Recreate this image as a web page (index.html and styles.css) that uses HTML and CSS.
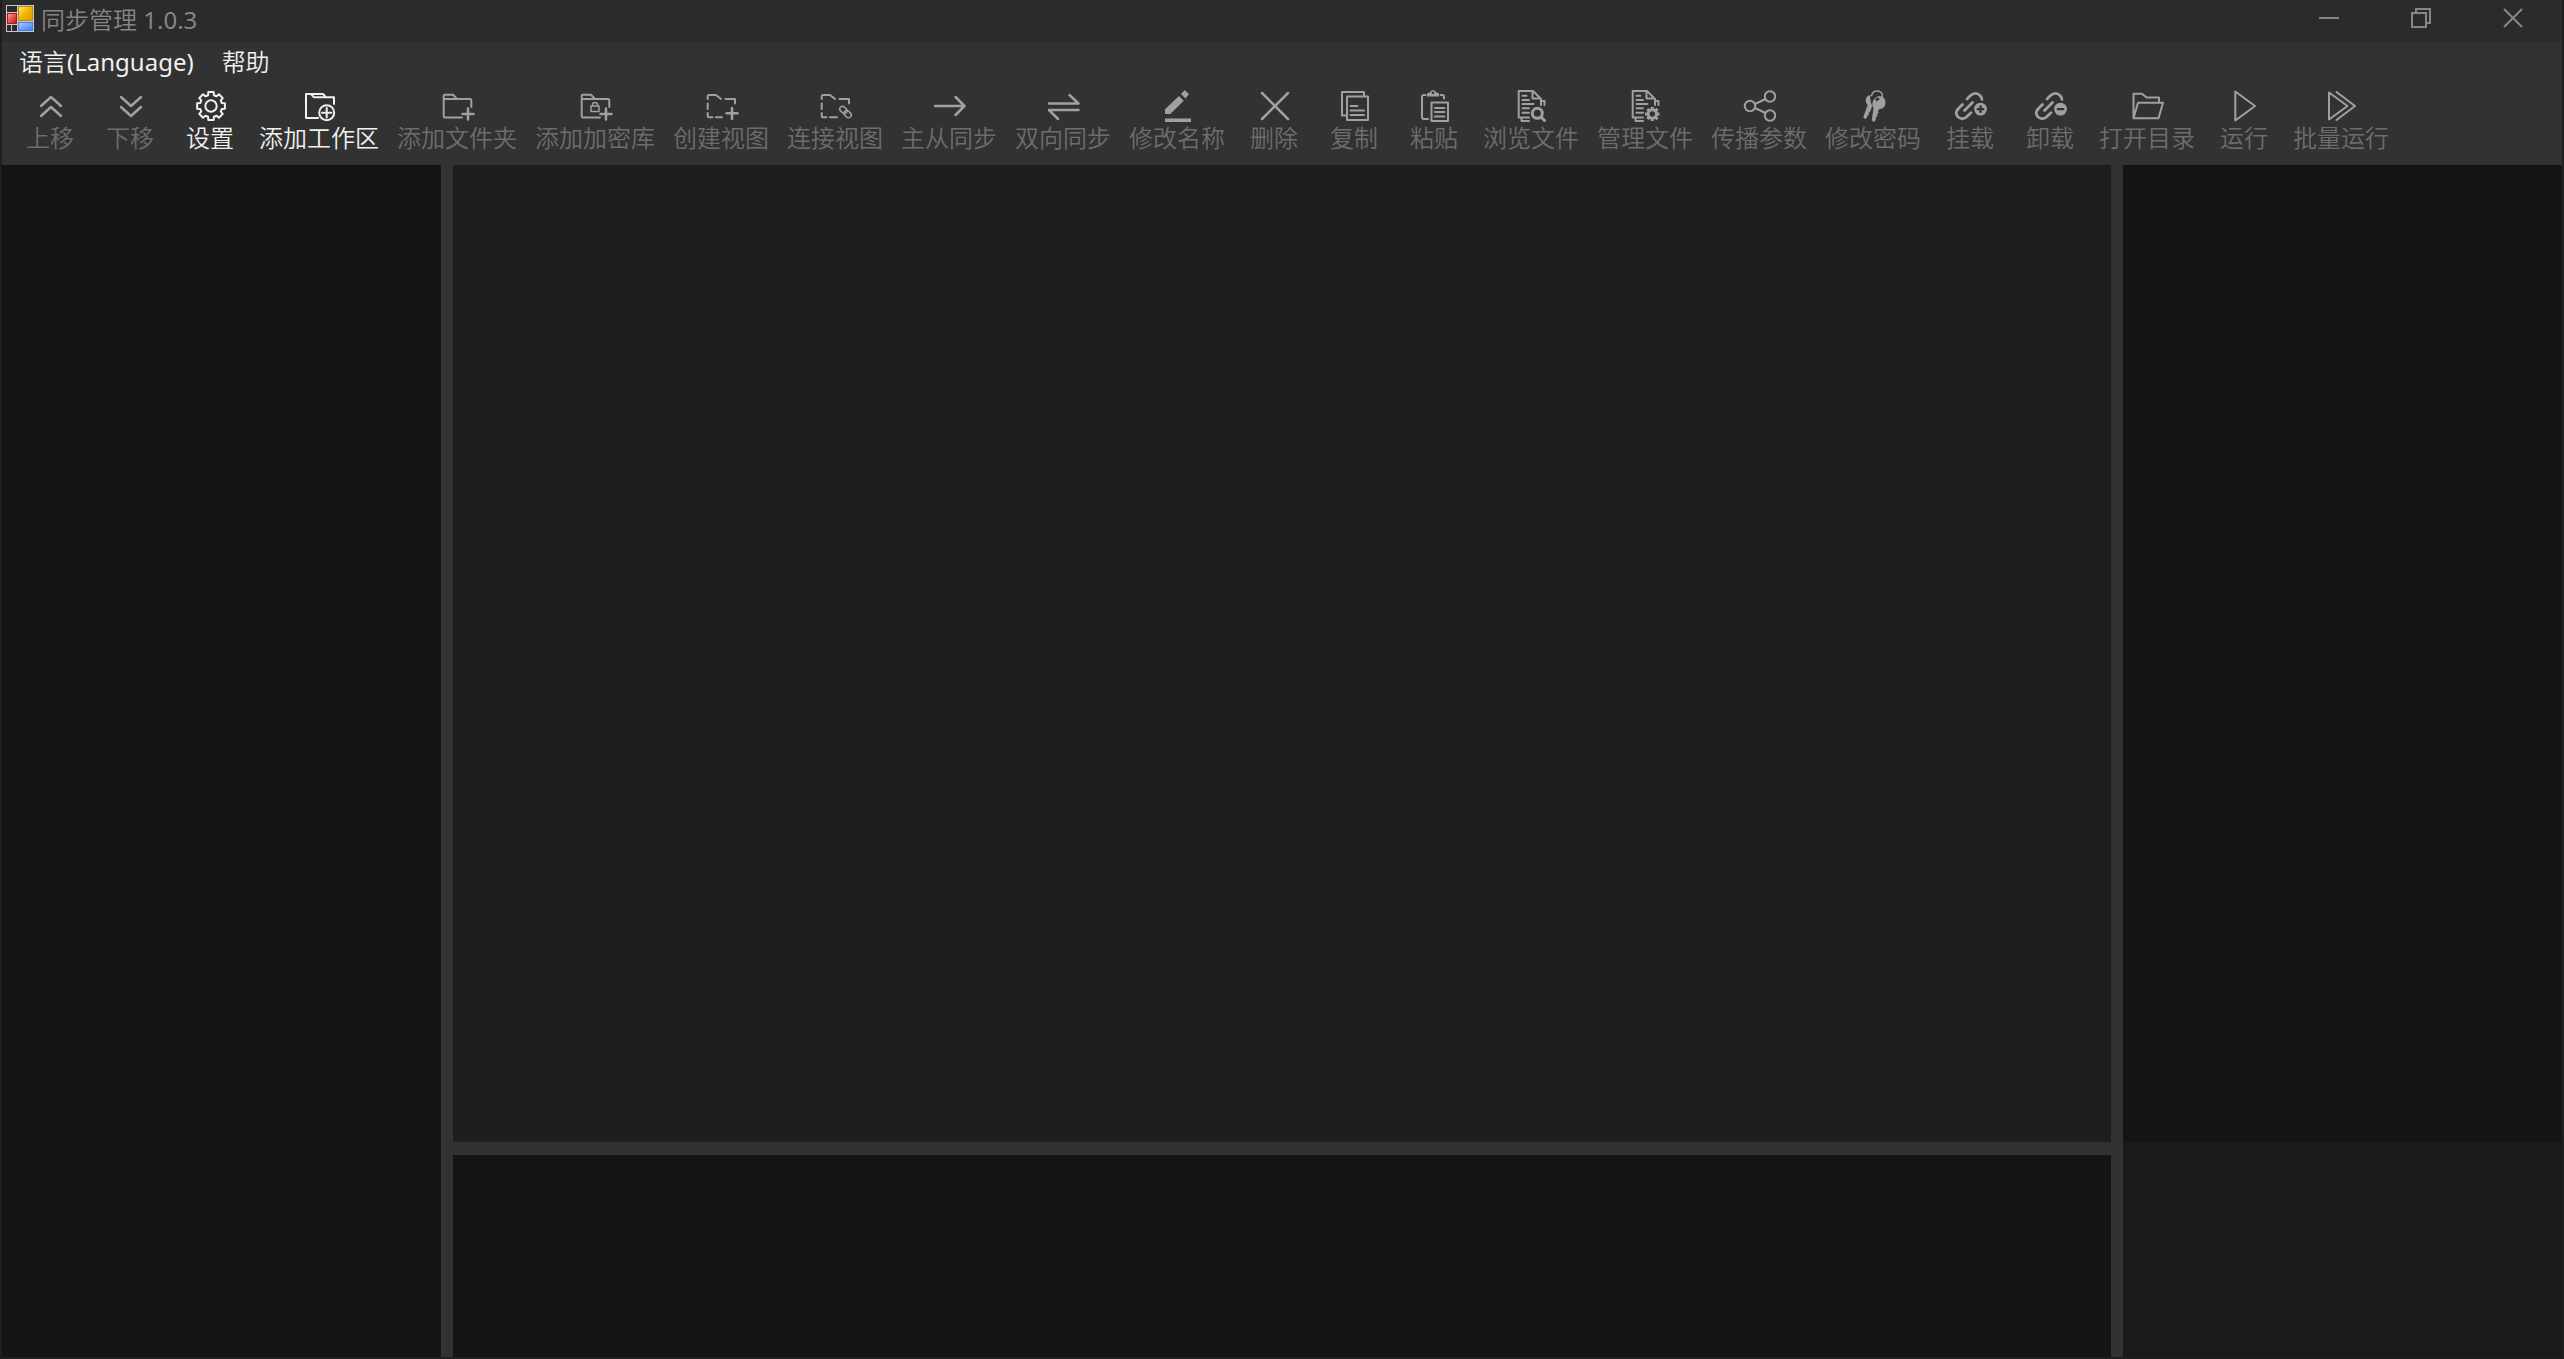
FILE: index.html
```html
<!DOCTYPE html>
<html lang="zh-CN">
<head>
    <meta charset="UTF-8">
    <title>同步管理 1.0.3</title>
    <link rel="stylesheet" href="styles.css">
</head>
<body>
<div class="window">
    <header class="titlebar">
        <svg class="app-icon" viewBox="0 0 28 28">
            <defs>
                <linearGradient id="gold" x1="0" y1="0" x2="1" y2="1"><stop offset="0" stop-color="#ffe27a"/><stop offset=".5" stop-color="#f0b400"/><stop offset="1" stop-color="#d99a00"/></linearGradient>
                <linearGradient id="red" x1="0" y1="0" x2="1" y2="1"><stop offset="0" stop-color="#ff9a8c"/><stop offset="1" stop-color="#c01414"/></linearGradient>
                <linearGradient id="blue" x1="0" y1="0" x2="1" y2="1"><stop offset="0" stop-color="#a9ccff"/><stop offset="1" stop-color="#3f7df0"/></linearGradient>
            </defs>
            <rect width="28" height="27" fill="#c8c8c8"/>
            <path fill="#2b2b2b" d="M1 1h10v6H1zM1 20h4v6H1zM6 20h5v6H6z"/>
            <rect x="1" y="8" width="10" height="11" fill="#c01414"/>
            <rect x="2" y="9" width="8" height="9" fill="url(#red)"/>
            <rect x="12" y="1" width="15" height="15" fill="#b88a10"/>
            <rect x="13" y="2" width="13" height="13" fill="url(#gold)"/>
            <rect x="12" y="17" width="15" height="9" fill="#3f7df0"/>
            <rect x="13" y="18" width="13" height="7" fill="url(#blue)"/>
        </svg>
        <h1 class="title">同步管理 <span class="latin">1.0.3</span></h1>
        <div class="controls">
            <button aria-label="最小化"><svg viewBox="0 0 20 20"><path d="M0 10h20"/></svg></button>
            <button aria-label="还原"><svg viewBox="0 0 20 20"><path d="M1 5h14v14H1zM5 5V1h14v14h-4"/></svg></button>
            <button aria-label="关闭"><svg viewBox="0 0 20 20"><path d="M1 1l18 18M19 1L1 19"/></svg></button>
        </div>
    </header>

    <nav class="menu">
        <button>语言<span class="latin">(Language)</span></button>
        <button>帮助</button>
    </nav>

    <div class="toolbar">
        <button class="tool" disabled>
            <svg viewBox="0 0 32 32"><path class="thick" d="M7 16L17 7l10 9M7 26l10-9 10 9"/></svg>
            <span>上移</span>
        </button>
        <button class="tool" disabled>
            <svg viewBox="0 0 32 32"><path class="thick" d="M7 7l10 9 10-9M7 17l10 9 10-9"/></svg>
            <span>下移</span>
        </button>
        <button class="tool">
            <svg viewBox="0 0 32 32"><g transform="translate(17 16)"><path d="M13.9-2.7V2.7L10.8 2.9 9.7 5.6 11.8 7.9 7.9 11.8 5.6 9.7 2.9 10.8 2.7 13.9H-2.7L-2.9 10.8-5.6 9.7-7.9 11.8-11.8 7.9-9.7 5.6-10.8 2.9-13.9 2.7V-2.7L-10.8-2.9-9.7-5.6-11.8-7.9-7.9-11.8-5.6-9.7-2.9-10.8-2.7-13.9H2.7L2.9-10.8 5.6-9.7 7.9-11.8 11.8-7.9 9.7-5.6 10.8-2.9z"/><circle r="5.7"/></g></svg>
            <span>设置</span>
        </button>
        <button class="tool">
            <svg viewBox="0 0 32 32"><path d="M15 28H3V4h17l3 3.300h8V14M8 4l3 3.300h12"/><circle cx="23.700" cy="22.700" r="7.500"/><path d="M23.700 18v9.400M19 22.700h9.400"/></svg>
            <span>添加工作区</span>
        </button>
        <button class="tool" disabled>
            <svg viewBox="0 0 32 32"><path d="M21 27.500H4q-1.300 0-1.300-1.300V6q0-1.300 1.300-1.300h8L16 9h13q1.300 0 1.300 1.300V17M3 9h13"/><path class="thick" d="M27 18.500v11M21.500 24h11"/></svg>
            <span>添加文件夹</span>
        </button>
        <button class="tool" disabled>
            <svg viewBox="0 0 32 32"><path d="M21 27.500H4q-1.300 0-1.300-1.300V6q0-1.300 1.300-1.300h8L16 9h13q1.300 0 1.300 1.300V17M3 9h13"/><path class="thin" d="M12 16h8v5.500h-8zM13.500 16v-1q0-2.500 2.500-2.500t2.500 2.500v1"/><path class="thick" d="M27 18.500v11M21.500 24h11"/></svg>
            <span>添加加密库</span>
        </button>
        <button class="tool" disabled>
            <svg viewBox="0 0 32 32"><path d="M2.700 9V6.500Q2.700 5 4.200 5H11l5 4M20.500 9H30v4.500M2.700 13.500v5.500M2.700 23v3q0 1.300 1.300 1.300h3.500M11 27.300h6"/><path class="thick" d="M27 18v11M21.500 23.300h11"/></svg>
            <span>创建视图</span>
        </button>
        <button class="tool" disabled>
            <svg viewBox="0 0 32 32"><path d="M2.700 9V6.500Q2.700 5 4.200 5H11l5 4M20.500 9H30v4.500M2.700 13.500v5.500M2.700 23v3q0 1.300 1.300 1.300h3.500M11 27.300h7"/><g class="thin" transform="translate(26.500 22) rotate(45)"><rect x="-7" y="-2.700" width="8" height="5.400" rx="2.700"/><rect x="-1" y="-2.700" width="8" height="5.400" rx="2.700"/></g></svg>
            <span>连接视图</span>
        </button>
        <button class="tool" disabled>
            <svg viewBox="0 0 32 32"><path class="thick" d="M2 16h29M22.500 7l9 9-9 9"/></svg>
            <span>主从同步</span>
        </button>
        <button class="tool" disabled>
            <svg viewBox="0 0 32 32"><path class="thick" d="M2 13.500h29.500L22.500 5M31.500 20H2l9 9"/></svg>
            <span>双向同步</span>
        </button>
        <button class="tool" disabled>
            <svg viewBox="0 0 32 32"><path class="solid" d="M4 28.500h26V32H4zM4 24v-4.700L18 6l4.700 4.700L9.300 24zM23.700 0L28 4.300l-3.500 4.200L20 4z"/></svg>
            <span>修改名称</span>
        </button>
        <button class="tool" disabled>
            <svg viewBox="0 0 32 32"><path class="thick" d="M4 3l26 26M30 3L4 29"/></svg>
            <span>删除</span>
        </button>
        <button class="tool" disabled>
            <svg viewBox="0 0 32 32"><path d="M8 25.500H4V2h22v4M9 6.500h21V30H9zM12.500 16h7M12.500 20.500H26M12.500 25H26"/></svg>
            <span>复制</span>
        </button>
        <button class="tool" disabled>
            <svg viewBox="0 0 32 32"><path d="M7.500 5H6Q4 5 4 7v20q0 2 2 2h4M22.500 5H24q2 0 2 2v1.500M13.500 12.500H30V31H13.500zM17 18h9.500M17 22h9.500M17 26.500h9.500"/><path class="solid" fill-rule="evenodd" d="M9 6.500V4.500q0-2 2-2h1Q12.500 0 15 0t3 2.500h1q2 0 2 2v2zM15 1.500a1.300 1.300 0 100 2.600 1.300 1.300 0 000-2.600z"/></svg>
            <span>粘贴</span>
        </button>
        <button class="tool" disabled>
            <svg viewBox="0 0 32 32"><path d="M14 27.500H3.700V1H18l8 8v6M17.500 1v7.500H25M26 11h3.500v4M6.500 28v3H14M7.500 5.700h4M7.500 10h6.500M7.500 14h11M7.500 18.300H14M7.500 22.700H14"/><circle class="heavy" cx="22.300" cy="23.300" r="5"/><path class="heavy" d="M26 27l3.500 3.500"/></svg>
            <span>浏览文件</span>
        </button>
        <button class="tool" disabled>
            <svg viewBox="0 0 32 32"><path d="M14 27.500H3.700V1H18l8 8v6M17.500 1v7.500H25M26 11h3.500v4M6.500 28v3H14M7.500 5.700h4M7.500 10h6.500M7.500 14h11M7.500 18.300H14M7.500 22.700H14"/><circle class="heavy" cx="23.300" cy="24" r="4.200"/><path class="heavy butt" d="M28 24h2.500M16 24h2.500M23.300 19.500V17M23.300 31v-2.500M26.500 20.800l2-2M18.300 29l2-2M26.500 27.200l2 2M18.300 19l2 2"/></svg>
            <span>管理文件</span>
        </button>
        <button class="tool" disabled>
            <svg viewBox="0 0 32 32"><circle cx="7" cy="16" r="5.200"/><circle cx="27" cy="6.500" r="5.200"/><circle cx="27" cy="25.500" r="5.200"/><path d="M12 14l10.500-5M12 18l10.500 5"/></svg>
            <span>传播参数</span>
        </button>
        <button class="tool" disabled>
            <svg viewBox="0 0 32 32"><path class="solid" d="M13.500 5Q9 5.500 8.700 10.500q0 3 2 4.500L6.300 27l1.500 2 2-1 .7-2.500 1.500-1-.3-1.700 1.500-1 2-6Q12.500 10 13.500 5z"/><path class="solid" fill-rule="evenodd" d="M22 6q6.500.5 6.500 6.500 0 6-6 6.500l-1.500 2 .7 1.800-1.500 1.200.3 2-1.500 1.200-.5 3.300-2 1.500-1.700-2 1.700-12Q14.300 15 16 11q1.800-4 6-5zM20.500 7.500a2 2 0 100 4 2 2 0 000-4z"/><path class="thin" d="M14.500 5.500Q16 1 20 1q5 0 5.500 5 0 4-4.500 5"/></svg>
            <span>修改密码</span>
        </button>
        <button class="tool" disabled>
            <svg viewBox="0 0 32 32"><path class="link" d="M13 9l3.500-3.500q4.500-4 9-.5 2.500 2.500 2.500 4.500M8.500 14.500L4 19q-3.500 4 0 8 4.500 3.500 8.500 0L17 22.700M10.500 20.500l8-8"/><path class="solid" fill-rule="evenodd" d="M26.500 12.700a6.400 6.400 0 100 12.800 6.400 6.400 0 000-12.800zm-1.200 2.700h2.400v2.500h2.500v2.400h-2.500v2.500h-2.400v-2.500h-2.500v-2.400h2.500z"/></svg>
            <span>挂载</span>
        </button>
        <button class="tool" disabled>
            <svg viewBox="0 0 32 32"><path class="link" d="M13 9l3.500-3.500q4.500-4 9-.5 2.500 2.500 2.500 4.500M8.500 14.500L4 19q-3.500 4 0 8 4.500 3.500 8.500 0L17 22.700M10.500 20.500l8-8"/><path class="solid" fill-rule="evenodd" d="M26.500 12.700a6.400 6.400 0 100 12.800 6.400 6.400 0 000-12.800zm-3.700 5.200h7.400v2.400h-7.400z"/></svg>
            <span>卸载</span>
        </button>
        <button class="tool" disabled>
            <svg viewBox="0 0 32 32"><path d="M2.500 28V3.700H11l4.500 3.800H28v5M2.500 28.300L7 12.700h25l-4.500 15.600z"/></svg>
            <span>打开目录</span>
        </button>
        <button class="tool" disabled>
            <svg viewBox="0 0 32 32"><path d="M7.300 1.500L27 16 7.300 30.500z"/></svg>
            <span>运行</span>
        </button>
        <button class="tool" disabled>
            <svg viewBox="0 0 32 32"><path d="M4 2.500L22.500 16 4 29.500zM11.500 2L30 16 11.500 30"/></svg>
            <span>批量运行</span>
        </button>
    </div>

    <main class="workspace">
        <aside class="panel"></aside>
        <div class="center">
            <section class="canvas"></section>
            <section class="output"></section>
        </div>
        <aside class="side">
            <section class="props"></section>
            <section class="hint"></section>
        </aside>
    </main>
</div>
</body>
</html>
```
FILE: styles.css
```css
* {
    margin: 0;
    padding: 0;
    box-sizing: border-box;
}
body {
    background: #323232;
    font-family: "Noto Sans", "Noto Sans CJK SC", sans-serif;
    font-size: 24px;
    font-weight: 350;
    line-height: 32px;
    color: #f0f0f0;
}
button {
    background: none;
    border: none;
    color: inherit;
    font: inherit;
}
svg {
    display: block;
    fill: none;
    stroke: currentColor;
    stroke-width: 2;
}
.latin {
    font-weight: 400;
}
.window {
    display: flex;
    flex-direction: column;
    height: 100vh;
    border: 2px solid #1f1f1f;
    border-top: none;
}

/* title bar */
.titlebar {
    display: flex;
    align-items: center;
    height: 42px;
    padding-left: 4px;
    background: #2b2b2b;
    color: #868686;
}
.app-icon {
    width: 28px;
    height: 28px;
    margin-bottom: 4px;
    stroke: none;
}
.title {
    margin-left: 7px;
    padding-bottom: 2px;
    font-size: 24px;
    font-weight: 350;
}
.controls {
    display: flex;
    align-self: flex-start;
    margin-left: auto;
    padding-right: 3px;
}
.controls button {
    display: flex;
    align-items: center;
    justify-content: center;
    width: 92px;
    height: 36px;
}
.controls svg {
    width: 20px;
    height: 20px;
}

/* menu */
.menu {
    display: flex;
    height: 41px;
    padding: 0 3px 2px;
}
.menu button {
    padding: 0 14px;
}

/* toolbar */
.toolbar {
    display: flex;
    height: 82px;
    padding: 7px 8px 0;
}
.tool {
    display: flex;
    flex-direction: column;
    align-items: center;
    min-width: 80px;
    padding: 0 9px;
    white-space: nowrap;
}
.tool svg {
    width: 32px;
    height: 32px;
    overflow: visible;
    stroke-linejoin: round;
    stroke-linecap: round;
}
.tool:disabled {
    color: #6d6d6d;
}
.tool:disabled svg {
    color: #a0a0a0;
}
.thin {
    stroke-width: 1.5;
}
.thick {
    stroke-width: 2.5;
}
.heavy {
    stroke-width: 3;
}
.link {
    stroke-width: 2.8;
}
.butt {
    stroke-linecap: butt;
}
.solid {
    fill: currentColor;
    stroke: none;
}

/* panels, the gaps are the splitters */
.workspace {
    display: grid;
    grid-template-columns: 439fr 1658fr 439fr;
    column-gap: 12px;
    flex: 1;
}
.panel,
.output,
.props {
    background: #141414;
}
.center {
    display: grid;
    grid-template-rows: 977fr 202fr;
    row-gap: 13px;
}
.canvas {
    background: #1e1e1e;
}
.side {
    display: grid;
    grid-template-rows: 977fr 215fr;
}
.hint {
    background: #1a1a1a;
}
```
